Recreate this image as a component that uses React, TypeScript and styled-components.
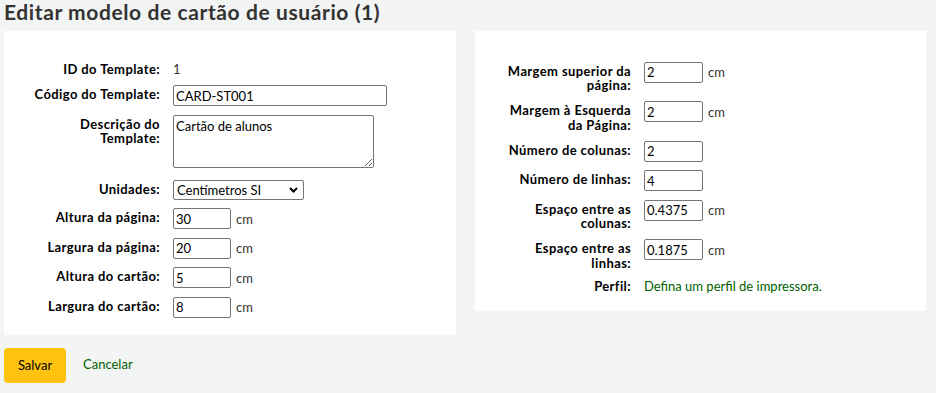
import styled, { createGlobalStyle } from "styled-components"

const GlobalStyle = createGlobalStyle`
  body {
    margin: 0;
    background: #f3f4f4;
    font-family: Lato, "Liberation Sans", sans-serif;
    font-size: 13px;
    color: #000;
  }
`

const Page = styled.main`
  padding: 0 10px 0 4px;
`

const Title = styled.h1`
  margin: 0 0 7px;
  font-size: 21px;
  letter-spacing: 0.6px;
  line-height: 24px;
  font-weight: 700;
  color: #333;
`

const Columns = styled.div`
  display: flex;
  align-items: flex-start;
  gap: 19px;
`

const Panel = styled.fieldset`
  box-sizing: border-box;
  width: ${p => p.$width}px;
  margin: 0;
  border: 0;
  background: #fff;
  padding: 30.5px 0 17px 28px;
`

const Rows = styled.ol`
  margin: 0;
  padding: 0;
  list-style: none;
  display: flex;
  flex-direction: column;
  gap: 8.5px;
`

const Row = styled.li`
  display: flex;
  align-items: flex-start;
  gap: 13px;
  margin-bottom: ${p => p.$extra || 0}px;
`

const Label = styled.label`
  width: 128px;
  flex: none;
  text-align: right;
  font-weight: 700;
  letter-spacing: 0.4px;
  line-height: 14.5px;
  padding-top: ${p => (p.$plain ? 0 : 2)}px;
`

const Value = styled.span`
  line-height: 15px;
  color: ${p => (p.$link ? "#006100" : "#333")};
`

const Field = styled.span`
  display: flex;
  align-items: center;
  gap: 5px;
  color: #333;
`

const Input = styled.input`
  box-sizing: border-box;
  width: ${p => p.$width}px;
  height: 21px;
  margin: 0;
  padding: 1px 2px;
  border: 1px solid #767676;
  border-radius: 2px;
  font: inherit;
  color: #000;
`

const TextArea = styled.textarea`
  box-sizing: border-box;
  width: 201px;
  height: 53px;
  margin: 0;
  padding: 2px;
  border: 1px solid #767676;
  border-radius: 2px;
  font: inherit;
  color: #000;
  display: block;
`

const SelectBox = styled.span`
  position: relative;
  display: block;
  width: 131px;
  height: 20px;
`

const Select = styled.select`
  box-sizing: border-box;
  appearance: none;
  width: 100%;
  height: 100%;
  margin: 0;
  padding: 0 20px 0 3px;
  border: 1px solid #767676;
  border-radius: 2px;
  background: #fff;
  font: inherit;
  color: #000;
`

const Chevron = styled.svg`
  position: absolute;
  right: 6px;
  top: 7px;
  pointer-events: none;
`

const Actions = styled.div`
  display: flex;
  align-items: center;
  gap: 17px;
  margin-top: 13px;
`

const SaveButton = styled.button`
  width: 62px;
  height: 35px;
  border: 0;
  border-radius: 4px;
  background: #ffc20e;
  font: inherit;
  color: #000;
`

const CancelLink = styled.a`
  color: #006100;
  text-decoration: none;
  margin-top: -3px;
`

function TextRow({ label, value, width, unit }: { label: string; value: string; width: number; unit?: boolean }) {
  return (
    <Row>
      <Label>{label}</Label>
      <Field>
        <Input $width={width} defaultValue={value} />
        {unit && "cm"}
      </Field>
    </Row>
  )
}

export default function App() {
  return (
    <Page>
      <GlobalStyle />
      <Title>Editar modelo de cartão de usuário (1)</Title>
      <Columns>
        <Panel $width={452}>
          <Rows>
            <Row>
              <Label $plain>ID do Template:</Label>
              <Value>1</Value>
            </Row>
            <TextRow label="Código do Template:" value="CARD-ST001" width={214} />
            <Row $extra={3.5}>
              <Label>Descrição do Template:</Label>
              <TextArea defaultValue="Cartão de alunos" />
            </Row>
            <Row>
              <Label>Unidades:</Label>
              <SelectBox>
                <Select defaultValue="cm">
                  <option value="cm">Centímetros SI</option>
                </Select>
                <Chevron width="9" height="6" viewBox="0 0 9 6">
                  <path d="M1 1l3.5 3.5L8 1" fill="none" stroke="#000" strokeWidth="2" />
                </Chevron>
              </SelectBox>
            </Row>
            <TextRow label="Altura da página:" value="30" width={58} unit />
            <TextRow label="Largura da página:" value="20" width={58} unit />
            <TextRow label="Altura do cartão:" value="5" width={58} unit />
            <TextRow label="Largura do cartão:" value="8" width={58} unit />
          </Rows>
        </Panel>
        <Panel $width={451}>
          <Rows>
            <TextRow label="Margem superior da página:" value="2" width={59} unit />
            <TextRow label="Margem à Esquerda da Página:" value="2" width={59} unit />
            <TextRow label="Número de colunas:" value="2" width={59} />
            <TextRow label="Número de linhas:" value="4" width={59} />
            <TextRow label="Espaço entre as colunas:" value="0.4375" width={59} unit />
            <TextRow label="Espaço entre as linhas:" value="0.1875" width={59} unit />
            <Row>
              <Label $plain>Perfil:</Label>
              <Value $link>Defina um perfil de impressora.</Value>
            </Row>
          </Rows>
        </Panel>
      </Columns>
      <Actions>
        <SaveButton>Salvar</SaveButton>
        <CancelLink href="#">Cancelar</CancelLink>
      </Actions>
    </Page>
  )
}
